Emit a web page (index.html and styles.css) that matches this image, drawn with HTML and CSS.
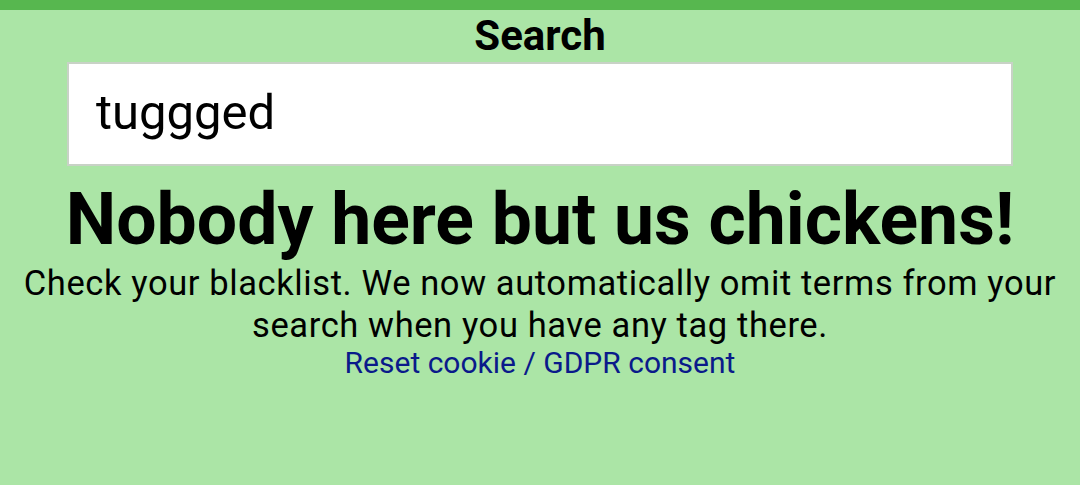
FILE: index.html
```html
<!DOCTYPE html>
<html>
<head>
<meta charset="utf-8">
<link rel="stylesheet" href="styles.css">
</head>
<body>
<div class="topbar"></div>
<main class="content">
  <h2 class="search-title">Search</h2>
  <div class="search-box">tuggged</div>
  <h1 class="headline">Nobody here but us chickens!</h1>
  <p class="message">Check your blacklist. We now automatically omit terms from your search when you have any tag there.</p>
  <a class="reset-link" href="#">Reset cookie / GDPR consent</a>
</main>
</body>
</html>
```

FILE: styles.css
```css
html, body {
  margin: 0;
  padding: 0;
  background: #abe5a6;
  font-family: Roboto, "Noto Sans", sans-serif;
  color: #000;
}
.topbar {
  height: 10px;
  background: #57b74f;
}
.content {
  display: flex;
  flex-direction: column;
  align-items: center;
  text-align: center;
}
.search-title {
  margin: 0;
  font-size: 42px;
  font-weight: 700;
  line-height: 52px;
}
.search-box {
  box-sizing: border-box;
  width: 946px;
  height: 104px;
  background: #fff;
  border: 2px solid #c8d2c6;
  padding: 0 27px;
  font-size: 49px;
  line-height: 98px;
  text-align: left;
}
.headline {
  margin: 12px 0 0;
  font-size: 71.5px;
  font-weight: 700;
  line-height: 84px;
}
.message {
  margin: 0;
  width: 1060px;
  font-size: 34.5px;
  letter-spacing: 0.6px;
  line-height: 42px;
}
.reset-link {
  font-size: 30px;
  line-height: 34px;
  color: #0a1a8a;
  text-decoration: none;
}
```
